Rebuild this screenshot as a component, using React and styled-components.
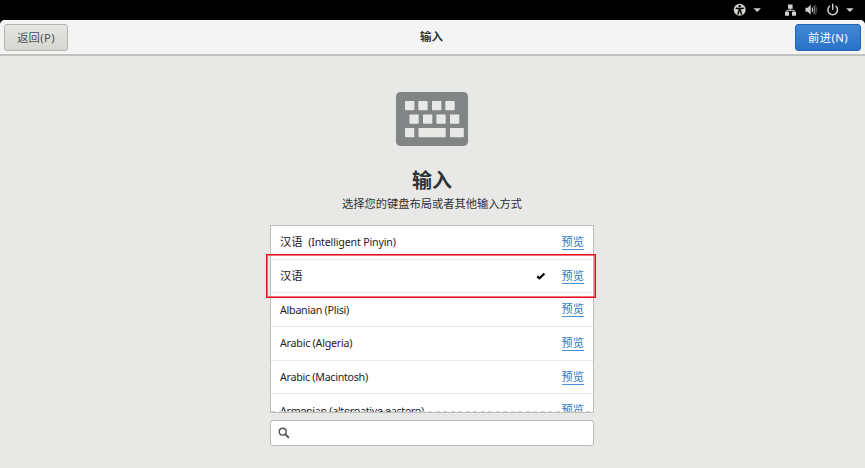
import React from "react";
import styled, { createGlobalStyle } from "styled-components";

const Global = createGlobalStyle`
  * { box-sizing: border-box; }
  html, body { margin: 0; background: #000; }
  body {
    font-family: "Noto Sans", "Noto Sans CJK SC", sans-serif;
    font-size: 10.7px;
    color: #2e3436;
    overflow: hidden;
  }
`;

const Screen = styled.div`
  width: 865px;
  height: 468px;
  display: flex;
  flex-direction: column;
  background: #000;
`;

const TopBar = styled.div`
  height: 20px;
  flex: none;
  display: flex;
  justify-content: flex-end;
  padding-right: 10px;
  color: #d0d0cc;
  svg { display: block; }
`;

const Window = styled.div`
  flex: 1;
  min-height: 0;
  display: flex;
  flex-direction: column;
  background: #e8e8e6;
  border-radius: 5px 5px 0 0;
  overflow: hidden;
`;

const Header = styled.header`
  height: 36px;
  flex: none;
  display: grid;
  grid-template-columns: 64px 1fr 66px;
  align-items: start;
  padding: 4px 4px 0;
  background: #f4f4f4;
  border-bottom: 2px solid #c0c0be;
`;

const Title = styled.div`
  height: 26px;
  line-height: 26px;
  text-align: center;
  font-size: 11.5px;
  font-weight: 700;
`;

const Button = styled.button`
  height: 27px;
  padding: 0 0 2px;
  font: inherit;
  font-size: 11.3px;
  letter-spacing: 0.4px;
  white-space: nowrap;
  border-radius: 3px;
  border: 1px solid ${(p) => (p.$primary ? "#2465ad" : "#b3b3af")};
  color: ${(p) => (p.$primary ? "#fff" : "#4b5254")};
  background: ${(p) =>
    p.$primary
      ? "linear-gradient(#4187d5, #2a73c8)"
      : "linear-gradient(#e6e6e3, #d5d5d2)"};
`;

const Content = styled.main`
  display: flex;
  flex-direction: column;
  align-items: center;
  padding-top: 35.5px;
  padding-right: 1px;
`;

const Heading = styled.h1`
  margin: 20.5px 0 0;
  height: 29px;
  line-height: 30px;
  font-size: 20px;
  font-weight: 700;
`;

const Subtitle = styled.p`
  margin: 0;
  height: 18px;
  line-height: 18px;
  font-size: 11.25px;
  white-space: nowrap;
`;

const ListArea = styled.div`
  position: relative;
  width: 324px;
  margin-top: 12px;
`;

const List = styled.div`
  height: 188px;
  border: 1px solid #bfbfbc;
  background: #fff;
  overflow: hidden;
  position: relative;
`;

const Row = styled.div`
  height: 33.7px;
  display: flex;
  align-items: center;
  padding: 0 9px;
  border-bottom: 1px solid #e7e7e6;
  color: #1b1d1e;
`;

const Name = styled.span`
  flex: 1;
  line-height: 20px;
  white-space: pre;
  letter-spacing: ${(p) => p.$spacing}px;
`;

const Cjk = styled.span`
  font-size: 11.3px;
  letter-spacing: 0;
  margin-right: 3px;
`;

const Check = styled.svg`
  width: 10px;
  height: 8px;
  margin-right: 16px;
`;

const Preview = styled.a`
  height: 15px;
  line-height: 14px;
  font-size: 11.2px;
  color: #2a76c6;
  border-bottom: 1px solid #4a90d9;
`;

const Undershoot = styled.div`
  position: absolute;
  left: 0;
  right: 0;
  bottom: 0;
  height: 1px;
  background: repeating-linear-gradient(90deg, #d4d4d2 0 4px, transparent 4px 7.5px);
`;

const Highlight = styled.div`
  position: absolute;
  left: -4px;
  top: 29px;
  width: 330px;
  height: 44px;
  border: 1px solid #e60f1e;
  box-shadow: inset 0 0 0 0.5px #ef6b73;
  outline: 0.5px solid rgba(230, 15, 30, 0.4);
  outline-offset: -2px;
`;

const Search = styled.div`
  width: 324px;
  height: 26px;
  margin-top: 7px;
  padding-left: 7px;
  display: flex;
  align-items: center;
  border: 1px solid #bcbcb8;
  border-radius: 3px;
  background: #fff;
`;

const inputs = [
  { cjk: "汉语", name: " (Intelligent Pinyin)", spacing: -0.19 },
  { cjk: "汉语", name: "", selected: true, spacing: 0 },
  { name: "Albanian (Plisi)", spacing: -0.26 },
  { name: "Arabic (Algeria)", spacing: -0.24 },
  { name: "Arabic (Macintosh)", spacing: -0.28 },
  { name: "Armenian (alternative eastern)", spacing: -0.3 },
];

const StatusIcons = () => (
  <svg width="125" height="20" viewBox="730 0 125 20" fill="currentColor">
    <circle cx="739.7" cy="9.8" r="6" />
    <g stroke="#000" fill="none" strokeWidth="1.4" strokeLinecap="round">
      <path d="M736.2 8.3 739.7 8.8 743.2 8.3M739.7 8.8V11M738 14l1.2-4M741.4 14l-1.2-4" />
    </g>
    <circle cx="739.7" cy="6.3" r="1.2" fill="#000" />
    <path d="M753.5 8.2h7.4l-3.7 3.8z" />
    <path d="M788 4.5h4.6v4.2H788zM785 11.8h4v4h-4zM792 11.8h4v4h-4z" />
    <path d="M790.3 8v2.4M786.9 12v-1.7h7.2V12" fill="none" stroke="currentColor" />
    <path d="M805.5 7.8h2.2l3-3v10l-3-3h-2.2z" />
    <path d="M812 7.7q1.5 2.1 0 4.2" fill="none" stroke="currentColor" strokeWidth="1.2" />
    <path d="M813.6 6q2.6 3.8 0 7.6" fill="none" stroke="#999" strokeWidth="1.1" />
    <path d="M815 4.6q3.2 5.2 0 10.4" fill="none" stroke="#555" />
    <path d="M829.5 6.3a4.8 4.8 0 1 0 6.4 0M832.7 4.3v5" fill="none" stroke="currentColor" strokeWidth="1.5" strokeLinecap="round" />
    <path d="M846.2 8.2h7.4l-3.7 3.8z" />
  </svg>
);

const KeyboardIcon = () => (
  <svg width="72" height="54" viewBox="0 0 72 54">
    <rect width="72" height="54" rx="4.5" fill="#828585" />
    <g fill="#e8e8e6">
      {[9, 22.3, 36, 49.3].map((x) => (
        <rect key={x} x={x} y="9" width="9.4" height="9.3" rx="0.7" />
      ))}
      {[13.4, 27, 40.4, 54].map((x) => (
        <rect key={x} x={x} y="22.5" width="9.3" height="9.3" rx="0.7" />
      ))}
      <rect x="9" y="36" width="9.3" height="9.3" rx="0.7" />
      <rect x="22.5" y="36" width="27.2" height="9.3" rx="0.7" />
      <rect x="54" y="36" width="13.8" height="9.3" rx="0.7" />
    </g>
  </svg>
);

export default function App() {
  return (
    <Screen>
      <Global />
      <TopBar>
        <StatusIcons />
      </TopBar>
      <Window>
        <Header>
          <Button>返回(P)</Button>
          <Title>输入</Title>
          <Button $primary>前进(N)</Button>
        </Header>
        <Content>
          <KeyboardIcon />
          <Heading>输入</Heading>
          <Subtitle>选择您的键盘布局或者其他输入方式</Subtitle>
          <ListArea>
            <List>
              {inputs.map((item, i) => (
                <Row key={i}>
                  <Name $spacing={item.spacing}>
                    {item.cjk && <Cjk>{item.cjk}</Cjk>}
                    {item.name}
                  </Name>
                  {item.selected && (
                    <Check viewBox="0 0 10 8">
                      <path d="M1.2 4.3 3.5 6.2 8.4 1.5" fill="none" stroke="#000" strokeWidth="2.2" />
                    </Check>
                  )}
                  <Preview>预览</Preview>
                </Row>
              ))}
              <Undershoot />
            </List>
            <Highlight />
          </ListArea>
          <Search>
            <svg width="12" height="12" viewBox="0 0 12 12" fill="none" stroke="#4b5052">
              <circle cx="4.7" cy="4.7" r="3.4" strokeWidth="1.4" />
              <path d="m7.2 7.2 3.7 3.7" strokeWidth="1.8" />
            </svg>
          </Search>
        </Content>
      </Window>
    </Screen>
  );
}
